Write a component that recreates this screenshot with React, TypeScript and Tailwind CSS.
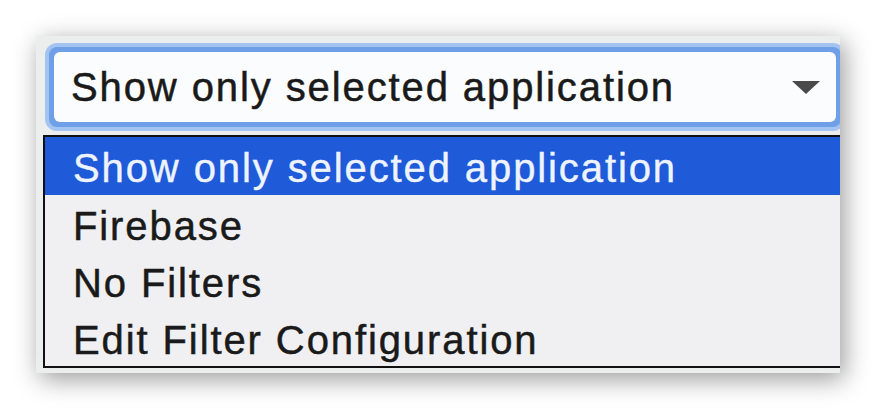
const options = [
  "Show only selected application",
  "Firebase",
  "No Filters",
  "Edit Filter Configuration",
];

function Arrow() {
  return (
    <svg width="28" height="13" viewBox="0 0 28 13" className="shrink-0">
      <path d="M0 0 H28 L14 13 Z" fill="#4a4a4a" />
    </svg>
  );
}

export default function App() {
  const font = { fontFamily: '"Liberation Sans", Arial, sans-serif' };
  return (
    <div className="h-[410px] w-[876px] bg-white pl-[36px] pt-[36px]" style={font}>
      <div className="h-[337px] w-[804px] overflow-hidden bg-[#eceded] shadow-[4px_6px_24px_rgba(0,0,0,0.4)]">
        {/* select box with focus ring */}
        <div className="ml-[9px] mt-[7px] w-[800px] rounded-[12px] border-[4px] border-[#a3c4f1] bg-[#6f9fe7] p-[5px]">
          <div className="flex h-[70px] items-center rounded-[6px] bg-[#fbfcfd] pl-[17px] pr-[16px]">
            <span className="flex-1 text-[40px] leading-[70px] tracking-[1.9px] text-[#1a1a1a] [-webkit-text-stroke:0.5px_#1a1a1a]">
              Show only selected application
            </span>
            <Arrow />
          </div>
        </div>

        {/* open list */}
        <div className="ml-[7px] mt-[4px] w-[820px] border-2 border-[#111] bg-[#f0f0f2]">
          {options.map((opt, i) => (
            <div
              key={opt}
              className={
                i === 0
                  ? "h-[58px] bg-[#1f5ad9] pl-[28px] pt-[6px] text-[40px] leading-[51px] tracking-[1.9px] text-[#eef4ff] [-webkit-text-stroke:0.4px_#eef4ff]"
                  : "h-[57px] pl-[28px] pt-[6px] text-[40px] leading-[51px] tracking-[1.9px] text-[#1a1a1a] [-webkit-text-stroke:0.5px_#1a1a1a]"
              }
            >
              {opt}
            </div>
          ))}
        </div>
      </div>
    </div>
  );
}
